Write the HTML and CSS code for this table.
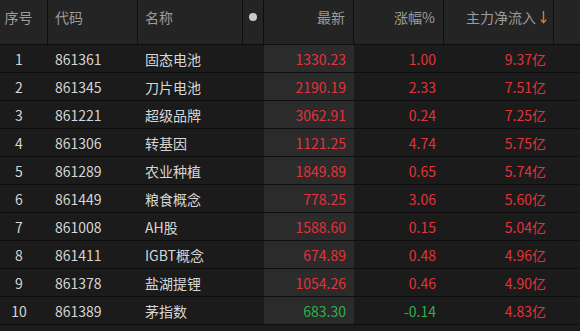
FILE: index.html
```html
<!DOCTYPE html>
<html lang="zh">
<head>
<meta charset="utf-8">
<link rel="stylesheet" href="styles.css">
</head>
<body>
<div class="board">
  <div class="row head">
    <div class="c idx">序号</div>
    <div class="c code">代码</div>
    <div class="c name">名称</div>
    <div class="c dotc"><span class="dot"></span></div>
    <div class="c num">最新</div>
    <div class="c num">涨幅%</div>
    <div class="c num flow">主力净流入<svg class="arrow" width="7" height="14" viewBox="0 0 7 14"><path d="M3.5 1 V12.5 M0.8 9.6 L3.5 12.6 L6.2 9.6" fill="none" stroke="#e8751f" stroke-width="1.4"/></svg></div>
    <div class="c last"></div>
  </div>
  <div class="row"><div class="c idx">1</div><div class="c code">861361</div><div class="c name">固态电池</div><div class="c"></div><div class="c num price up">1330.23</div><div class="c num up">1.00</div><div class="c num up">9.37亿</div><div class="c"></div></div>
  <div class="row"><div class="c idx">2</div><div class="c code">861345</div><div class="c name">刀片电池</div><div class="c"></div><div class="c num price up">2190.19</div><div class="c num up">2.33</div><div class="c num up">7.51亿</div><div class="c"></div></div>
  <div class="row"><div class="c idx">3</div><div class="c code">861221</div><div class="c name">超级品牌</div><div class="c"></div><div class="c num price up">3062.91</div><div class="c num up">0.24</div><div class="c num up">7.25亿</div><div class="c"></div></div>
  <div class="row"><div class="c idx">4</div><div class="c code">861306</div><div class="c name">转基因</div><div class="c"></div><div class="c num price up">1121.25</div><div class="c num up">4.74</div><div class="c num up">5.75亿</div><div class="c"></div></div>
  <div class="row"><div class="c idx">5</div><div class="c code">861289</div><div class="c name">农业种植</div><div class="c"></div><div class="c num price up">1849.89</div><div class="c num up">0.65</div><div class="c num up">5.74亿</div><div class="c"></div></div>
  <div class="row"><div class="c idx">6</div><div class="c code">861449</div><div class="c name">粮食概念</div><div class="c"></div><div class="c num price up">778.25</div><div class="c num up">3.06</div><div class="c num up">5.60亿</div><div class="c"></div></div>
  <div class="row"><div class="c idx">7</div><div class="c code">861008</div><div class="c name">AH股</div><div class="c"></div><div class="c num price up">1588.60</div><div class="c num up">0.15</div><div class="c num up">5.04亿</div><div class="c"></div></div>
  <div class="row"><div class="c idx">8</div><div class="c code">861411</div><div class="c name">IGBT概念</div><div class="c"></div><div class="c num price up">674.89</div><div class="c num up">0.48</div><div class="c num up">4.96亿</div><div class="c"></div></div>
  <div class="row"><div class="c idx">9</div><div class="c code">861378</div><div class="c name">盐湖提锂</div><div class="c"></div><div class="c num price up">1054.26</div><div class="c num up">0.46</div><div class="c num up">4.90亿</div><div class="c"></div></div>
  <div class="row"><div class="c idx">10</div><div class="c code">861389</div><div class="c name">茅指数</div><div class="c"></div><div class="c num price down">683.30</div><div class="c num down">-0.14</div><div class="c num up">4.83亿</div><div class="c"></div></div>
</div>
</body>
</html>
```
FILE: styles.css
```css
* { box-sizing: border-box; }
html, body { margin: 0; padding: 0; background: #1b1b1b; }
body {
  width: 580px;
  height: 331px;
  overflow: hidden;
  font-family: "Noto Sans CJK SC", "Noto Sans", sans-serif;
  font-size: 14px;
  color: #d6d6d6;
}
.board { display: flex; flex-direction: column; }
.row {
  display: grid;
  grid-template-columns: 48px 90px 105px 21px 90px 90px 110px 1fr;
  height: 28px;
  border-bottom: 1px solid #0e0e0e;
  background: #1b1b1b;
}
.row.head {
  height: 45px;
  background: #242424;
  border-bottom: 1px solid #0e0e0e;
  color: #9c9c9c;
}
.c {
  display: flex;
  align-items: center;
  line-height: 18px;
  white-space: nowrap;
}
.head .c {
  border-right: 1px solid #0e0e0e;
  align-items: flex-start;
  padding-top: 8px;
}
.head .c.last { border-right: none; }
.idx { justify-content: center; padding-right: 10px; }
.code { padding-left: 7px; }
.name { padding-left: 7px; }
.num { justify-content: flex-end; padding-right: 8px; }
.head .num { padding-right: 8px; }
.flow { padding-right: 2px; }
.head .flow { padding-right: 6px; }
.arrow { margin-left: 4px; margin-top: 2px; }
.dotc { justify-content: center; }
.head .dotc { padding-top: 13px; }
.dot {
  width: 8px;
  height: 8px;
  border-radius: 50%;
  background: #c9c9c9;
}
.price { background: #2b2b2b; }
.up { color: #e0343c; }
.down { color: #2fb24b; }
```
